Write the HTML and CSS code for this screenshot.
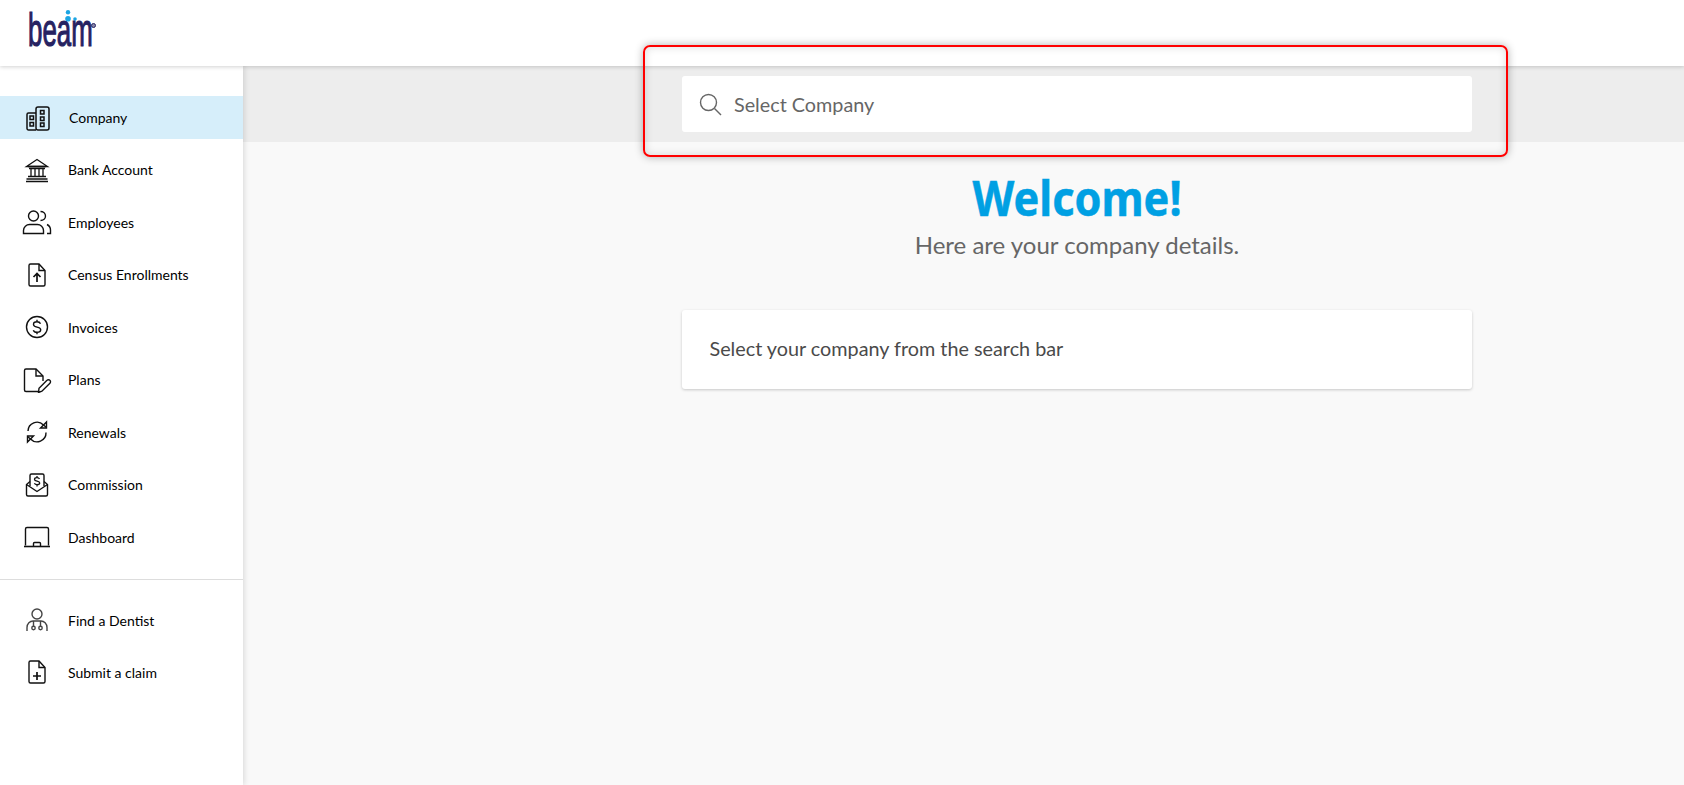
FILE: index.html
```html
<!DOCTYPE html>
<html lang="en">
<head>
<meta charset="utf-8">
<title>Beam</title>
<link rel="stylesheet" href="styles.css">
</head>
<body>
<header class="topbar">
  <div class="logo">
    <svg class="logo-dots" width="14" height="14" viewBox="0 0 14 14"><circle cx="4" cy="2.2" r="2.2" fill="#1ba5e4"/><circle cx="4" cy="8.8" r="2.8" fill="#1ba5e4"/><circle cx="11" cy="9" r="1.800" fill="#1ba5e4"/></svg>
    <span class="logo-word">beam</span>
    <span class="logo-reg"></span>
  </div>
</header>
<div class="shell">
  <nav class="sidebar">
    <ul class="nav nav-main">
      <li class="nav-item active"><span class="ico"><svg width="26" height="26" viewBox="0 0 26 26" fill="none" stroke="#111" stroke-width="1.500"><path d="M12 8H4.500A1.500 1.500 0 0 0 3 9.500v14A1.500 1.500 0 0 0 4.500 25H12"/><rect x="12" y="2" width="13" height="23" rx="2"/><path d="M6 11h3.500v3.500H6zM6 17.500h3.500V21H6zM16.500 5.500H20V9h-3.500zM16.500 12H20v3.500h-3.500zM16.500 18H20v3.500h-3.500z"/></svg></span><span>Company</span></li>
      <li class="nav-item"><span class="ico"><svg width="26" height="26" viewBox="0 0 26 26" fill="none" stroke="#111" stroke-width="1.300"><path d="M2.500 9.500 13 2.500l10.500 7z"/><path d="M4 9.500h18M5 11.500h16M7 12v7M11 12v7M15 12v7M19 12v7M4 19.500h18M2.500 22h21M2 24.500h22"/></svg></span><span>Bank Account</span></li>
      <li class="nav-item"><span class="ico"><svg width="30" height="26" viewBox="0 0 30 26" fill="none" stroke="#111" stroke-width="1.400"><circle cx="11.500" cy="7" r="5"/><path d="M1.500 24.500v-3c0-3.500 3-6 6-6h8c3 0 6 2.500 6 6v3z"/><path d="M18.500 2.500c2.800 0 5 2 5 4.500s-2.200 4.500-5 4.500M25 15.500c2 1 3.500 3 3.500 5.500v3.500H25"/></svg></span><span>Employees</span></li>
      <li class="nav-item"><span class="ico"><svg width="26" height="26" viewBox="0 0 26 26" fill="none" stroke="#111" stroke-width="1.400"><path d="M6.500 2h8.500l6 6.500v14a1.500 1.500 0 0 1-1.500 1.500h-13A1.500 1.500 0 0 1 5 22.500v-19A1.500 1.500 0 0 1 6.500 2z"/><path d="M15 2v6.500h6"/><path d="M13 20v-8M9.500 15l3.500-3.500 3.500 3.500" stroke-width="1.700"/></svg></span><span>Census Enrollments</span></li>
      <li class="nav-item"><span class="ico"><svg width="26" height="26" viewBox="0 0 26 26" fill="none" stroke="#111" stroke-width="1.400"><circle cx="13" cy="13" r="10.500"/><path d="M16.500 9.800c-.5-1.300-2-2-3.500-2-2 0-3.500 1-3.500 2.600 0 3.700 7.200 1.700 7.200 5.400 0 1.600-1.700 2.500-3.700 2.500-1.700 0-3.200-.8-3.700-2.100M13 5.800v2M13 18.300v2"/></svg></span><span>Invoices</span></li>
      <li class="nav-item"><span class="ico"><svg width="30" height="26" viewBox="0 0 30 26" fill="none" stroke="#111" stroke-width="1.400"><path d="M17 24.500H4a1.500 1.500 0 0 1-1.500-1.500V3.500A1.500 1.500 0 0 1 4 2h10l7 7v5"/><path d="M14 2v7h7"/><path d="M16.500 25.500l.5-4.200 8-8a2 2 0 0 1 2.900 0 2 2 0 0 1 0 2.900l-8 8z"/></svg></span><span>Plans</span></li>
      <li class="nav-item"><span class="ico"><svg width="26" height="26" viewBox="0 0 26 26" fill="none" stroke="#111" stroke-width="1.400"><path d="M4 12a9 9 0 0 1 15.500-6l3 2.500"/><path d="M22 13.500a9 9 0 0 1-15.500 6.500l-3-2.500"/><path d="M22.500 3v6h-6zM3.500 23v-6h6z"/></svg></span><span>Renewals</span></li>
      <li class="nav-item"><span class="ico"><svg width="26" height="26" viewBox="0 0 26 26" fill="none" stroke="#111" stroke-width="1.400"><path d="M6 14V3.500A1.500 1.500 0 0 1 7.500 2h11A1.500 1.500 0 0 1 20 3.500V14"/><path d="M6 9.500 2.500 12.500v10A1.500 1.500 0 0 0 4 24h18a1.500 1.500 0 0 0 1.500-1.500v-10L20 9.500"/><path d="M2.500 12.500 13 19.500l10.500-7"/><path d="M15.500 7c-.4-.8-1.400-1.300-2.500-1.300-1.400 0-2.500.7-2.500 1.800 0 2.300 5.200 1.100 5.200 3.400 0 1.100-1.200 1.800-2.700 1.800-1.200 0-2.200-.5-2.600-1.400M13 4v1.700M13 12.700v1.700" stroke-width="1.300"/></svg></span><span>Commission</span></li>
      <li class="nav-item"><span class="ico"><svg width="28" height="26" viewBox="0 0 28 26" fill="none" stroke="#111" stroke-width="1.400"><path d="M2.500 21.500V5a1.500 1.500 0 0 1 1.500-1.500h20A1.500 1.500 0 0 1 25.500 5v16.500"/><path d="M1 22.500h26" stroke-width="1.600"/><path d="M10.500 22v-2.500a1 1 0 0 1 1-1h5a1 1 0 0 1 1 1V22"/></svg></span><span>Dashboard</span></li>
    </ul>
    <hr class="divider">
    <ul class="nav">
      <li class="nav-item"><span class="ico"><svg width="26" height="26" viewBox="0 0 26 26" fill="none" stroke="#444" stroke-width="1.400"><circle cx="13" cy="7" r="5"/><path d="M3 24v-3.500c0-4 3-6.500 6-6.500h8c3 0 6 2.500 6 6.500V24"/><path d="M9.500 14v5M16.500 14v5"/><circle cx="9.500" cy="21" r="1.700"/><circle cx="16.500" cy="21" r="1.700"/></svg></span><span>Find a Dentist</span></li>
      <li class="nav-item"><span class="ico"><svg width="26" height="26" viewBox="0 0 26 26" fill="none" stroke="#111" stroke-width="1.400"><path d="M6.500 2h8.500l6 6.500v14a1.500 1.500 0 0 1-1.500 1.500h-13A1.500 1.500 0 0 1 5 22.500v-19A1.500 1.500 0 0 1 6.500 2z"/><path d="M15 2v6.500h6"/><path d="M13 13v8M9 17h8" stroke-width="1.700"/></svg></span><span>Submit a claim</span></li>
    </ul>
  </nav>
  <main class="main">
    <section class="search-band">
      <div class="search-box">
        <svg width="24" height="24" viewBox="0 0 24 24" fill="none" stroke="#666" stroke-width="1.400"><circle cx="10.500" cy="10.500" r="8"/><path d="m16.500 16.500 6.500 6.500"/></svg>
        <span>Select Company</span>
      </div>
    </section>
    <section class="content">
      <h1 class="welcome"><span class="welcome-text">Welcome!</span></h1>
      <p class="subtitle">Here are your company details.</p>
      <div class="card">Select your company from the search bar</div>
    </section>
  </main>
</div>
<div class="annotation"></div>
</body>
</html>
```
FILE: styles.css
```css
* { box-sizing: border-box; }
html, body { height: 100%; }
body {
  margin: 0;
  height: 785px;
  overflow: hidden;
  display: flex;
  flex-direction: column;
  font-family: Lato, "Liberation Sans", sans-serif;
  background: #f9f9f9;
}
.topbar {
  height: 66px;
  flex: none;
  background: #fff;
  padding-left: 28px;
  position: relative;
  z-index: 3;
  box-shadow: 0 1px 4px rgba(0,0,0,.18);
}
.logo {
  position: relative;
  width: 70px;
  height: 66px;
}
.logo-word {
  position: absolute;
  left: 0;
  top: 5px;
  font-family: "Liberation Sans", sans-serif;
  font-size: 47px;
  line-height: 50px;
  color: #262261;
  transform: scaleX(.55);
  transform-origin: left center;
  -webkit-text-stroke: 1.200px #262261;
}
.logo-dots { position: absolute; left: 36px; top: 10px; }
.logo-reg {
  position: absolute;
  left: 63px;
  top: 23px;
  width: 5px;
  height: 5px;
  border-radius: 50%;
  border: 1px solid #262261;
  background: #8886a8;
}
.shell { flex: 1; display: flex; min-height: 0; }
.sidebar {
  width: 243px;
  flex: none;
  background: #fff;
  padding-top: 30px;
  position: relative;
  z-index: 2;
  box-shadow: 1px 0 6px rgba(0,0,0,.14);
}
.nav { list-style: none; margin: 0; padding: 0; display: flex; flex-direction: column; gap: 9.450px; }
.nav-item {
  height: 43px;
  display: flex;
  align-items: center;
  font-size: 14px;
  color: #000;
}
.nav-item.active { background: #d6eefa; }
.nav-item.active .ico { margin-right: 19px; }
.ico {
  width: 26px;
  height: 26px;
  margin-left: 24px;
  margin-right: 18px;
  display: flex;
  align-items: center;
  justify-content: center;
}
.ico svg { flex: none; }
.divider { margin: 20px 0 19px; border: 0; border-top: 1px solid #ddd; }
.main { flex: 1; min-width: 0; }
.search-band {
  height: 76px;
  background: #ededed;
  padding: 10px 0 0 439px;
}
.search-box {
  width: 790px;
  height: 56px;
  background: #fff;
  border-radius: 3px;
  display: flex;
  align-items: center;
  gap: 12px;
  padding-left: 16px;
  font-size: 19.800px;
  color: #666;
}
.content { width: 790px; margin-left: 439px; }
.welcome {
  margin: 28px 0 0;
  text-align: center;
  font-family: "Noto Sans", sans-serif;
  font-weight: 700;
  font-size: 48px;
  line-height: 56px;
  color: #00a0e3;
}
.welcome-text { display: inline-block; transform: scaleX(.9); -webkit-text-stroke: .5px #00a0e3; }
.subtitle {
  margin: 4px 0 0;
  text-align: center;
  font-size: 24px;
  line-height: 30px;
  color: #666;
}
.card {
  margin-top: 50px;
  height: 79px;
  background: #fff;
  border-radius: 3px;
  box-shadow: 0 1px 3px rgba(0,0,0,.2);
  display: flex;
  align-items: center;
  padding: 0 0 4px 27.500px;
  font-size: 19.800px;
  color: #4a4a4a;
}
.annotation {
  position: absolute;
  left: 643px;
  top: 45px;
  width: 865px;
  height: 112px;
  border: 2px solid #f00;
  border-radius: 7px;
  z-index: 5;
  box-shadow: 0 0 8px rgba(0,0,0,.3), inset 0 0 8px rgba(0,0,0,.14);
}
```
